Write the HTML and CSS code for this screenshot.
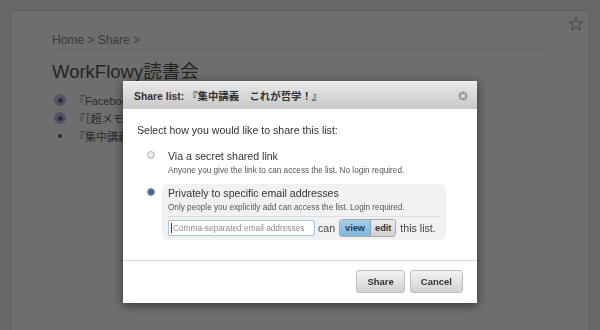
FILE: index.html
```html
<!DOCTYPE html>
<html lang="en">
  <head>
    <meta charset="UTF-8" />
    <title>WorkFlowy - Share</title>
    <link rel="stylesheet" href="styles.css">
  </head>
  <body>
    <div class="card">
      <svg class="star" width="16" height="16" viewBox="0 0 16 16">
        <path d="M8 1.2 L9.9 5.6 L14.6 6 L11 9.1 L12.1 13.8 L8 11.3 L3.9 13.8 L5 9.1 L1.4 6 L6.1 5.6 Z" fill="none" stroke="#b4b4b4" stroke-width="1.1" stroke-linejoin="round"/>
      </svg>
      <div class="crumbs">Home &gt; Share &gt;</div>
      <h1 class="title">WorkFlowy読書会</h1>
      <ul class="items">
        <li class="item"><span class="bullet open"></span>『Facebookページ』</li>
        <li class="item"><span class="bullet open"></span>『［超メモ学入門］』</li>
        <li class="item"><span class="bullet"></span>『集中講義』</li>
      </ul>
    </div>

    <div class="overlay"></div>

    <div class="dialog">
      <div class="dialog-head">
        <span class="dialog-title">Share list: 『集中講義　これが哲学！』</span>
        <svg class="close" width="12" height="12" viewBox="0 0 12 12">
          <circle cx="6" cy="6" r="5.5" fill="#d8d8d8"/>
          <circle cx="6" cy="6" r="4.5" fill="#9c9c9c"/>
          <path d="M4.3 4.3 L7.7 7.7 M7.7 4.3 L4.3 7.7" stroke="#e8e8e8" stroke-width="1.3"/>
        </svg>
      </div>
      <div class="dialog-body">
        <p class="lead">Select how you would like to share this list:</p>
        <div class="option">
          <span class="radio"></span>
          <div class="option-box">
            <div class="option-title">Via a secret shared link</div>
            <div class="option-note">Anyone you give the link to can access the list. No login required.</div>
          </div>
        </div>
        <div class="option">
          <span class="radio checked"></span>
          <div class="option-box selected">
            <div class="option-title">Privately to specific email addresses</div>
            <div class="option-note">Only people you explicitly add can access the list. Login required.</div>
            <div class="invite-row">
              <div class="email-input"><span class="caret"></span>Comma-separated email addresses</div>
              <span class="word">can</span>
              <div class="perm">
                <span class="perm-btn active">view</span>
                <span class="perm-btn">edit</span>
              </div>
              <span class="word">this list.</span>
            </div>
          </div>
        </div>
      </div>
      <div class="dialog-foot">
        <button class="btn">Share</button>
        <button class="btn">Cancel</button>
      </div>
    </div>
  </body>
</html>
```

FILE: styles.css
```css
* {
  margin: 0;
  padding: 0;
  box-sizing: border-box;
}

body {
  font-family: 'Liberation Sans', Arial, 'Noto Sans CJK JP', sans-serif;
  background: #f2f2f2;
  color: #333;
  height: 330px;
  overflow: hidden;
}

/* page behind the dialog */
.card {
  position: relative;
  margin: 10px 10px 0;
  height: 330px;
  background: #fff;
  border: 1px solid #dcdcdc;
  border-radius: 6px;
  padding: 22px 41px 0;
}

.star {
  position: absolute;
  top: 5px;
  right: 5px;
}

.crumbs {
  font-size: 12px;
  line-height: 14px;
  color: #8c8c8c;
  padding-bottom: 2px;
  border-bottom: 1px solid #ececec;
}

.title {
  font-size: 18.5px;
  font-weight: normal;
  line-height: 24px;
  color: #555;
  margin-top: 10px;
}

.items {
  list-style: none;
  margin-top: 7px;
}

.item {
  display: flex;
  align-items: center;
  height: 18px;
  font-size: 11px;
  color: #666;
}

.bullet {
  width: 12px;
  height: 12px;
  margin: 0 8px 0 2px;
  border-radius: 50%;
  display: flex;
  align-items: center;
  justify-content: center;
}

.bullet::after {
  content: '';
  width: 4px;
  height: 4px;
  border-radius: 50%;
  background: #666;
}

.bullet.open {
  background: #c6bdee;
}

.bullet.open::after {
  width: 5px;
  height: 5px;
  background: #6a6488;
}

.overlay {
  position: fixed;
  inset: 0;
  background: rgba(0, 0, 0, 0.57);
}

/* share dialog */
.dialog {
  position: fixed;
  top: 81px;
  left: 50%;
  transform: translateX(-50%);
  width: 354px;
  background: #fff;
  box-shadow: 0 2px 10px rgba(0, 0, 0, 0.55);
}

.dialog-head {
  height: 28px;
  display: flex;
  align-items: center;
  justify-content: space-between;
  padding: 0 8px 0 11px;
  background: linear-gradient(#e8e8e8, #c8c8c8);
  border-top: 1px solid #f2f2f2;
}

.dialog-title {
  font-size: 10.4px;
  font-weight: bold;
  color: #333;
}

.dialog-body {
  padding: 14px 14px 16px;
  border-bottom: 1px solid #dadada;
}

.lead {
  font-size: 10.6px;
  line-height: 14px;
  margin-bottom: 10px;
}

.option {
  display: flex;
  align-items: flex-start;
  margin-bottom: 4px;
}

.radio {
  width: 8px;
  height: 8px;
  margin: 4px 7px 0 10px;
  border-radius: 50%;
  border: 1px solid #bdbdbd;
  background: radial-gradient(circle at 40% 35%, #fafafa, #cdcdcd);
  flex-shrink: 0;
}

.radio.checked {
  border-color: #7a7a7a;
  background: radial-gradient(circle, #2f6aa8 0, #2f6aa8 2px, #8d8d8d 3px, #b9b9b9 4px);
}

.option-box {
  width: 284px;
  padding: 2px 6px 3px;
  border-radius: 5px;
}

.option-box.selected {
  background: #f1f1f1;
}

.option-title {
  font-size: 10.6px;
  line-height: 14px;
  color: #333;
}

.option-note {
  font-size: 8.2px;
  line-height: 12px;
  margin-top: 2px;
  color: #555;
}

.invite-row {
  display: flex;
  align-items: center;
  gap: 3px;
  margin-top: 2px;
  padding-top: 2px;
  border-top: 1px solid #dedede;
  white-space: nowrap;
}

.email-input {
  flex-shrink: 0;
  width: 147px;
  height: 16px;
  padding-left: 2px;
  display: flex;
  align-items: center;
  font-size: 8.3px;
  color: #8a8a8a;
  background: #fff;
  border: 1px solid #a9c3dc;
  border-radius: 2px;
}

.caret {
  width: 1px;
  height: 10px;
  background: #333;
  margin-right: 1px;
}

.word {
  flex-shrink: 0;
  font-size: 10.6px;
  color: #444;
}

.perm {
  flex-shrink: 0;
  display: flex;
  border: 1px solid #a8a8a8;
  border-radius: 3px;
  overflow: hidden;
  margin: 0 1px;
}

.perm-btn {
  font-size: 9.2px;
  font-weight: bold;
  line-height: 16px;
  padding: 0 4px;
  color: #333;
  background: linear-gradient(#ececec, #cfcfcf);
}

.perm-btn.active {
  padding: 0 5px;
  color: #1e3d5c;
  background: linear-gradient(#a7cfe9, #7fb6dc);
  border-right: 1px solid #8aa6bd;
}

.dialog-foot {
  display: flex;
  justify-content: flex-end;
  gap: 5px;
  padding: 9px 14px 10px;
}

.btn {
  font-family: inherit;
  font-size: 9.5px;
  font-weight: bold;
  color: #333;
  height: 23px;
  padding: 0 10px;
  border: 1px solid #bdbdbd;
  border-radius: 3px;
  background: linear-gradient(#f3f3f3, #d2d2d2);
}
```
